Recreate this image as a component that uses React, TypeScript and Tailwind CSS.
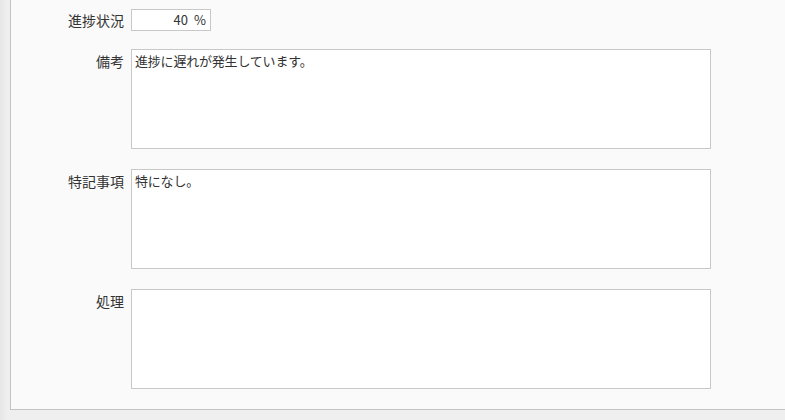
import React from "react";

const font = { fontFamily: '"Noto Sans CJK JP", "Noto Sans", sans-serif' };

function Row({ label, children, mt }: { label: string; children: React.ReactNode; mt: string }) {
  return (
    <div className={`flex items-start ${mt}`}>
      <div className="w-[114px] shrink-0 pr-[1px] text-right text-[14px] leading-[18px] text-[#333] pt-[3px]">{label}</div>
      <div className="ml-[6px]">{children}</div>
    </div>
  );
}

function Box({ text }: { text?: string }) {
  return (
    <div className="w-[580px] h-[100px] border border-[#c8c8c8] bg-white px-[3px] pt-[2px] text-[13px] leading-[18px] text-[#333] tracking-[-0.2px]">
      {text}
    </div>
  );
}

export default function App() {
  return (
    <div style={font} className="w-[785px] h-[420px] overflow-hidden bg-[#efefef] bg-gradient-to-r from-[#e6e6e6] via-[#efefef] via-[1%] to-[#efefef] pl-[10px]">
      <div className="w-[800px] h-[410px] border-l border-b border-[#c4c4c4] bg-[#fafafa] pt-[9px]">
        <div className="flex items-center">
          <div className="w-[114px] shrink-0 pr-[1px] text-right text-[14px] leading-[18px] text-[#333]">進捗状況</div>
          <div className="ml-[6px] w-[80px] h-[22px] border border-[#c8c8c8] bg-white text-right pr-[4px] text-[13px] leading-[20px] text-[#333]">
            40<span className="ml-[6px]">%</span>
          </div>
        </div>
        <Row label="備考" mt="mt-[18px]">
          <Box text="進捗に遅れが発生しています。" />
        </Row>
        <Row label="特記事項" mt="mt-[20px]">
          <Box text="特になし。" />
        </Row>
        <Row label="処理" mt="mt-[20px]">
          <Box />
        </Row>
      </div>
    </div>
  );
}
